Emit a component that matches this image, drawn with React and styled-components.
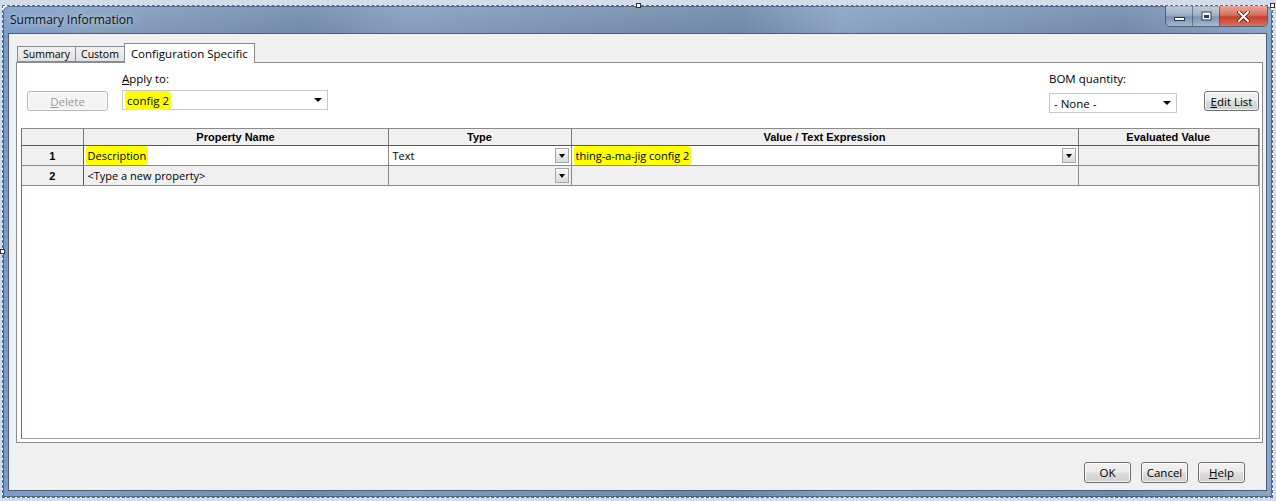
import React from 'react';
import styled, { createGlobalStyle } from 'styled-components';

const GlobalStyle = createGlobalStyle`
  html, body { margin: 0; padding: 0; }
  body {
    width: 1276px;
    height: 501px;
    overflow: hidden;
    background: #cfd9e8;
    font-family: "Open Sans", "Noto Sans", sans-serif;
  }
`;

const Desktop = styled.div`
  width: 1276px;
  height: 501px;
  box-sizing: border-box;
  padding: 5px 3px 3px 2px;
  background: #d3dcea;
`;

const Selection = styled.div`
  position: relative;
  height: 100%;
  box-sizing: border-box;
  border: 1px dashed #4d6f9f;
  background: #fff;
`;

const Handle = styled.div`
  position: absolute;
  width: 5px;
  height: 5px;
  box-sizing: border-box;
  border: 1px solid #333;
  background: #fff;
  left: ${p => p.$x}px;
  top: ${p => p.$y}px;
  z-index: 5;
`;

const Window = styled.div`
  height: 100%;
  display: flex;
  flex-direction: column;
  box-sizing: border-box;
  padding: 0 5px 6px 5px;
  border-radius: 6px 6px 0 0;
  background:
    linear-gradient(to bottom, rgba(255,255,255,0.12), rgba(255,255,255,0) 30px),
    linear-gradient(to right, #7a9bc8 0%, #84a0c2 6%, #7e97b5 12%, #6f89a8 24%, #839cbb 32%, #7890ae 45%, #6c86a6 58%, #87a1bf 66%, #7a94b2 78%, #7089a8 88%, #8aa4c4 100%);
  box-shadow: inset 0 0 0 1px rgba(40, 60, 90, 0.55);
`;

const TitleBar = styled.div`
  height: 27px;
  display: flex;
  align-items: flex-start;
`;

const Title = styled.div`
  margin: 5px 0 0 2px;
  font-size: 12px;
  color: #111;
  text-shadow: 0 0 6px rgba(255,255,255,0.7);
`;

const CaptionGroup = styled.div`
  margin-left: auto;
  margin-right: -1px;
  display: flex;
  height: 20px;
  border: 1px solid rgba(40, 55, 80, 0.6);
  border-top: none;
  border-radius: 0 0 5px 5px;
  overflow: hidden;
`;

const CaptionButton = styled.div`
  width: ${p => p.$w}px;
  height: 100%;
  display: flex;
  align-items: center;
  justify-content: center;
  border-left: ${p => (p.$first ? 'none' : '1px solid rgba(40,55,80,0.5)')};
  background: ${p =>
    p.$close
      ? 'linear-gradient(to bottom, #eaa79a 0%, #d8705f 45%, #c7402b 55%, #d9725f 100%)'
      : 'linear-gradient(to bottom, rgba(255,255,255,0.45) 0%, rgba(255,255,255,0.2) 45%, rgba(90,110,140,0.25) 55%, rgba(255,255,255,0.3) 100%)'};
`;

const Client = styled.div`
  flex: 1;
  display: flex;
  flex-direction: column;
  background: #f0f0f0;
  border: 1px solid #4a5d75;
  font-size: 11px;
  color: #000;
`;

const TabStrip = styled.div`
  height: 28px;
  display: flex;
  align-items: flex-end;
  padding-left: 8px;
`;

const Tab = styled.div`
  position: relative;
  box-sizing: border-box;
  height: ${p => (p.$active ? 20 : 16)}px;
  margin-bottom: ${p => (p.$active ? -1 : 0)}px;
  margin-right: -1px;
  padding: ${p => (p.$active ? '0 6px' : '0 5px')};
  display: flex;
  align-items: center;
  font-size: ${p => (p.$active ? 11.5 : 10.5)}px;
  border: 1px solid #898c95;
  border-bottom: ${p => (p.$active ? 'none' : '1px solid #898c95')};
  background: ${p => (p.$active ? '#fff' : 'linear-gradient(to bottom, #f2f2f2, #e1e1e1)')};
  z-index: ${p => (p.$active ? 2 : 1)};
`;

const Panel = styled.div`
  height: 379px;
  margin: 0 3px 0 7px;
  display: flex;
  flex-direction: column;
  border: 1px solid #898c95;
  background: #fff;
`;

const Toolbar = styled.div`
  height: 65px;
  display: flex;
  align-items: flex-start;
  padding: 0 3px 0 10px;
`;

const Field = styled.div`
  display: flex;
  flex-direction: column;
  width: ${p => p.$w}px;
  margin-top: 8px;
  margin-left: ${p => p.$ml || '0px'};
`;

const Label = styled.div`
  height: 19px;
  font-size: 11.5px;
  color: #000;
  margin-bottom: ${p => p.$gap || 0}px;
`;

const Combo = styled.div`
  height: 20px;
  box-sizing: border-box;
  display: flex;
  align-items: center;
  padding: 0 5px 0 4px;
  border: 1px solid #c9c9c9;
  background: #fff;
  font-size: 11.5px;
`;

const ComboArrow = styled.span`
  margin-left: auto;
  width: 0;
  height: 0;
  border-left: 4px solid transparent;
  border-right: 4px solid transparent;
  border-top: 4px solid #000;
`;

const Button = styled.div`
  box-sizing: border-box;
  width: ${p => p.$w}px;
  height: ${p => p.$h || 20}px;
  margin-top: ${p => p.$mt || 0}px;
  margin-left: ${p => p.$ml || 0}px;
  display: flex;
  align-items: center;
  justify-content: center;
  font-size: 11.5px;
  border-radius: 3px;
  border: 1px solid ${p => (p.$disabled ? '#b5b9bd' : '#707070')};
  color: ${p => (p.$disabled ? '#9a9a9a' : '#000')};
  background: ${p =>
    p.$disabled
      ? '#f4f4f4'
      : 'linear-gradient(to bottom, #f2f2f2 0%, #ebebeb 48%, #dddddd 52%, #cfcfcf 100%)'};
  box-shadow: inset 0 0 0 1px rgba(255,255,255,0.7);
`;

const Key = styled.span`
  text-decoration: underline;
`;

const Mark = styled.span`
  background: #ffff00;
  padding: 2px 2px;
  margin-left: -2px;
  border-radius: 3px;
`;

const GridBox = styled.div`
  flex: 1;
  margin: 0 2px 3px 4px;
  border: 1px solid #a0a0a0;
  border-left-color: #6e6e6e;
  border-top-color: #8a8a8a;
  background: #fff;
  overflow: hidden;
`;

const Table = styled.table`
  width: 100%;
  table-layout: fixed;
  border-collapse: collapse;
`;

const HeadCell = styled.th`
  height: 16px;
  padding: 0;
  font-family: "Liberation Sans", Arial, sans-serif;
  font-size: 11px;
  font-weight: bold;
  text-align: center;
  background: #f0f0f0;
  border-right: 1px solid #7a7a7a;
  border-bottom: 1px solid #5a5a5a;
`;

const NumCell = styled.td`
  height: ${p => p.$h}px;
  padding: 0;
  text-align: center;
  font-family: "Liberation Sans", Arial, sans-serif;
  font-weight: bold;
  font-size: 11px;
  background: #f0f0f0;
  border-right: 1px solid #5a5a5a;
  border-bottom: 1px solid #8a8a8a;
`;

const Cell = styled.td`
  height: ${p => p.$h}px;
  padding: 0 2px 0 4px;
  font-size: 11px;
  background: ${p => (p.$gray ? '#f0f0f0' : '#fff')};
  border-right: 1px solid #8a8a8a;
  border-bottom: 1px solid #8a8a8a;
`;

const CellInner = styled.div`
  display: flex;
  align-items: center;
  white-space: nowrap;
`;

const DropButton = styled.span`
  margin-left: auto;
  box-sizing: border-box;
  width: 14px;
  height: 15px;
  display: flex;
  align-items: center;
  justify-content: center;
  border: 1px solid #a7a7a7;
  background: linear-gradient(to bottom, #fafafa, #dadada);
`;

const DropGlyph = styled.span`
  width: 0;
  height: 0;
  border-left: 3px solid transparent;
  border-right: 3px solid transparent;
  border-top: 4px solid #000;
`;

const ButtonBar = styled.div`
  flex: 1;
  display: flex;
  justify-content: flex-end;
  align-items: flex-start;
  gap: 10px;
  padding: 19px 21px 0 0;
`;

const Dropdown = ({ children }) => (
  <CellInner>
    {children}
    <DropButton>
      <DropGlyph />
    </DropButton>
  </CellInner>
);

const MinGlyph = () => (
  <svg width="11" height="9" viewBox="0 0 11 9">
    <rect x="0.5" y="5.5" width="10" height="3" fill="#fff" stroke="#2a3b55" />
  </svg>
);

const MaxGlyph = () => (
  <svg width="11" height="10" viewBox="0 0 11 10">
    <rect x="0.5" y="0.5" width="10" height="9" fill="#2a3b55" />
    <rect x="1.5" y="1.5" width="8" height="7" fill="#fff" />
    <rect x="3" y="4" width="5" height="3" fill="#2a3b55" />
  </svg>
);

const CloseGlyph = () => (
  <svg width="13" height="11" viewBox="0 0 13 11">
    <path d="M2 1 L11 10 M11 1 L2 10" stroke="#4a1a14" strokeWidth="3.6" strokeLinecap="square" />
    <path d="M2 1 L11 10 M11 1 L2 10" stroke="#fff" strokeWidth="2" strokeLinecap="square" />
  </svg>
);

const App = () => {
  return (
    <>
      <GlobalStyle />
      <Desktop>
        <Selection>
          <Handle $x={633} $y={-3} />
          <Handle $x={-3} $y={243} />
          <Handle $x={1267} $y={-3} />
          <Window>
            <TitleBar>
              <Title>Summary Information</Title>
              <CaptionGroup>
                <CaptionButton $w={26} $first>
                  <MinGlyph />
                </CaptionButton>
                <CaptionButton $w={26}>
                  <MaxGlyph />
                </CaptionButton>
                <CaptionButton $w={47} $close>
                  <CloseGlyph />
                </CaptionButton>
              </CaptionGroup>
            </TitleBar>
            <Client>
              <TabStrip>
                <Tab>Summary</Tab>
                <Tab>Custom</Tab>
                <Tab $active>Configuration Specific</Tab>
              </TabStrip>
              <Panel>
                <Toolbar>
                  <Button $w={81} $mt={28} $disabled>
                    <Key>D</Key>elete
                  </Button>
                  <Field $w={206} $ml="14px">
                    <Label $gap={0}>
                      <Key>A</Key>pply to:
                    </Label>
                    <Combo>
                      <Mark>config 2</Mark>
                      <ComboArrow />
                    </Combo>
                  </Field>
                  <Field $w={128} $ml="auto">
                    <Label $gap={3}>BOM quantity:</Label>
                    <Combo>
                      - None -
                      <ComboArrow />
                    </Combo>
                  </Field>
                  <Button $w={55} $mt={28} $ml={27}>
                    <Key>E</Key>dit List
                  </Button>
                </Toolbar>
                <GridBox>
                  <Table>
                    <colgroup>
                      <col style={{ width: 61 }} />
                      <col style={{ width: 305 }} />
                      <col style={{ width: 183 }} />
                      <col style={{ width: 507 }} />
                      <col />
                    </colgroup>
                    <thead>
                      <tr>
                        <HeadCell />
                        <HeadCell>Property Name</HeadCell>
                        <HeadCell>Type</HeadCell>
                        <HeadCell>Value / Text Expression</HeadCell>
                        <HeadCell>Evaluated Value</HeadCell>
                      </tr>
                    </thead>
                    <tbody>
                      <tr>
                        <NumCell $h={18}>1</NumCell>
                        <Cell $h={18}>
                          <CellInner>
                            <Mark>Description</Mark>
                          </CellInner>
                        </Cell>
                        <Cell $h={18}>
                          <Dropdown>Text</Dropdown>
                        </Cell>
                        <Cell $h={18}>
                          <Dropdown>
                            <Mark>thing-a-ma-jig config 2</Mark>
                          </Dropdown>
                        </Cell>
                        <Cell $h={18} $gray />
                      </tr>
                      <tr>
                        <NumCell $h={19}>2</NumCell>
                        <Cell $h={19} $gray>
                          <CellInner>&lt;Type a new property&gt;</CellInner>
                        </Cell>
                        <Cell $h={19} $gray>
                          <Dropdown />
                        </Cell>
                        <Cell $h={19} $gray />
                        <Cell $h={19} $gray />
                      </tr>
                    </tbody>
                  </Table>
                </GridBox>
              </Panel>
              <ButtonBar>
                <Button $w={47} $h={21}>OK</Button>
                <Button $w={47} $h={21}>Cancel</Button>
                <Button $w={47} $h={21}>
                  <Key>H</Key>elp
                </Button>
              </ButtonBar>
            </Client>
          </Window>
        </Selection>
      </Desktop>
    </>
  );
};

export default App;
